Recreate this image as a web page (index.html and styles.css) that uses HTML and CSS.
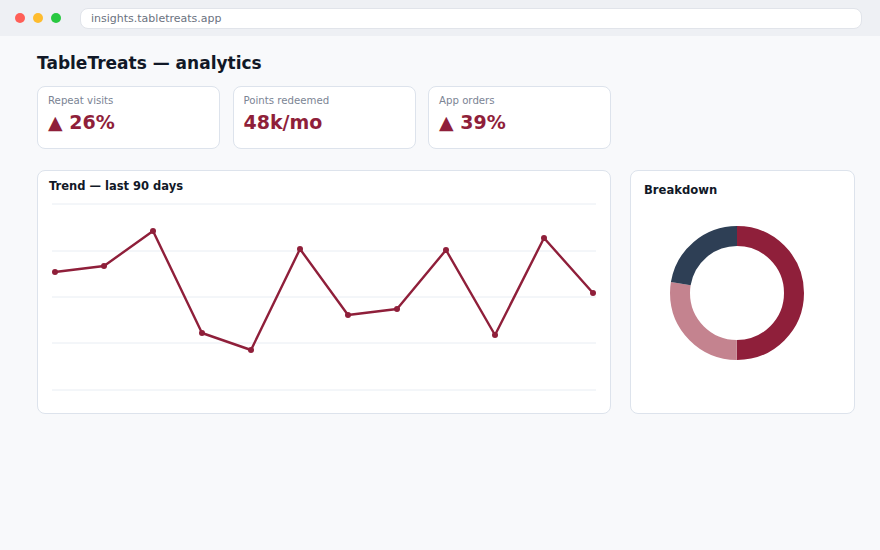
FILE: index.html
```html
<!DOCTYPE html>
<html lang="en">
<head>
  <meta charset="UTF-8">
  <meta name="viewport" content="width=device-width, initial-scale=1.0">
  <title>TableTreats analytics</title>
  <link rel="stylesheet" href="styles.css">
</head>
<body>
  <div class="topbar">
    <div class="dots">
      <span class="dot red"></span>
      <span class="dot yellow"></span>
      <span class="dot green"></span>
    </div>
    <div class="url">insights.tabletreats.app</div>
  </div>

  <main class="page">
    <h1>TableTreats — analytics</h1>

    <div class="kpis">
      <div class="kpi">
        <div class="kpi-label">Repeat visits</div>
        <div class="kpi-value">▲ 26%</div>
      </div>
      <div class="kpi">
        <div class="kpi-label">Points redeemed</div>
        <div class="kpi-value">48k/mo</div>
      </div>
      <div class="kpi">
        <div class="kpi-label">App orders</div>
        <div class="kpi-value">▲ 39%</div>
      </div>
    </div>

    <div class="panels">
      <div class="card trend">
        <h3>Trend — last 90 days</h3>
        <svg class="chart" viewBox="0 0 548 205" width="548" height="205">
          <g class="grid">
            <line x1="2" y1="6" x2="546" y2="6"/>
            <line x1="2" y1="53" x2="546" y2="53"/>
            <line x1="2" y1="99" x2="546" y2="99"/>
            <line x1="2" y1="145" x2="546" y2="145"/>
            <line x1="2" y1="192" x2="546" y2="192"/>
          </g>
          <polyline class="line" points="5,74 54,68 103,33 152,135 201,152 250,51 298,117 347,111 396,52 445,137 494,40 543,95"/>
          <g class="pts">
            <circle cx="5" cy="74" r="3"/>
            <circle cx="54" cy="68" r="3"/>
            <circle cx="103" cy="33" r="3"/>
            <circle cx="152" cy="135" r="3"/>
            <circle cx="201" cy="152" r="3"/>
            <circle cx="250" cy="51" r="3"/>
            <circle cx="298" cy="117" r="3"/>
            <circle cx="347" cy="111" r="3"/>
            <circle cx="396" cy="52" r="3"/>
            <circle cx="445" cy="137" r="3"/>
            <circle cx="494" cy="40" r="3"/>
            <circle cx="543" cy="95" r="3"/>
          </g>
        </svg>
      </div>

      <div class="card breakdown">
        <h3>Breakdown</h3>
        <svg class="donut" viewBox="0 0 140 140" width="140" height="140">
          <g transform="rotate(-90 70 70)">
            <circle class="seg seg-a" cx="70" cy="70" r="57" stroke-dasharray="179.07 358.14" stroke-dashoffset="0"/>
            <circle class="seg seg-b" cx="70" cy="70" r="57" stroke-dasharray="98.49 358.14" stroke-dashoffset="-179.07"/>
            <circle class="seg seg-c" cx="70" cy="70" r="57" stroke-dasharray="80.58 358.14" stroke-dashoffset="-277.56"/>
          </g>
        </svg>
      </div>
    </div>
  </main>
</body>
</html>
```

FILE: styles.css
```css
* {
  box-sizing: border-box;
}
body {
  margin: 0;
  background: #f8f9fb;
  font-family: "DejaVu Sans", sans-serif;
  color: #111827;
}
.topbar {
  height: 36px;
  background: #eef0f4;
  display: flex;
  align-items: center;
  padding: 0 18px 0 15px;
}
.dots {
  display: flex;
  gap: 8px;
  margin-right: 19px;
}
.dot {
  width: 10px;
  height: 10px;
  border-radius: 50%;
}
.dot.red { background: #ff5f57; }
.dot.yellow { background: #febc2e; }
.dot.green { background: #28c840; }
.url {
  flex: 1;
  height: 21px;
  background: #fff;
  border: 1px solid #e1e4ea;
  border-radius: 8px;
  padding: 0 10px;
  font-size: 11px;
  line-height: 19px;
  color: #6b7280;
}
.page {
  padding: 15px 25px 0 37px;
}
h1 {
  margin: 0 0 11px;
  font-size: 17px;
  line-height: 24px;
  font-weight: bold;
  color: #111827;
}
.kpis {
  display: grid;
  grid-template-columns: repeat(3, 183px);
  gap: 12px;
  width: 574px;
  justify-content: space-between;
}
.kpi {
  height: 63px;
  background: #fff;
  border: 1px solid #dde3ec;
  border-radius: 8px;
  padding: 7px 10px 0;
}
.kpi-label {
  font-size: 10.2px;
  line-height: 14px;
  color: #7b8494;
  margin-bottom: 2px;
}
.kpi-value {
  font-size: 19px;
  line-height: 24px;
  font-weight: bold;
  color: #8f1f3a;
}
.panels {
  display: grid;
  grid-template-columns: 574px 225px;
  gap: 19px;
  margin-top: 21px;
}
.card {
  background: #fff;
  border: 1px solid #dde3ec;
  border-radius: 8px;
  height: 244px;
}
.card h3 {
  margin: 0;
  font-weight: bold;
}
.trend {
  padding: 7px 11px 9px;
}
.trend h3 {
  font-size: 11.5px;
  line-height: 16px;
  margin-bottom: 4px;
}
.chart {
  display: block;
  margin-left: 1px;
}
.grid line {
  stroke: #e8edf3;
  stroke-width: 1;
}
.line {
  fill: none;
  stroke: #8f1f3a;
  stroke-width: 2.4;
  stroke-linejoin: round;
}
.pts circle {
  fill: #8f1f3a;
}
.breakdown {
  padding: 11px 13px;
}
.breakdown h3 {
  font-size: 11.6px;
  line-height: 16px;
}
.donut {
  display: block;
  margin: 25px 0 0 23px;
}
.seg {
  fill: none;
  stroke-width: 20;
}
.seg-a { stroke: #8f1f3a; }
.seg-b { stroke: #c4838f; }
.seg-c { stroke: #2e3f55; }
```
